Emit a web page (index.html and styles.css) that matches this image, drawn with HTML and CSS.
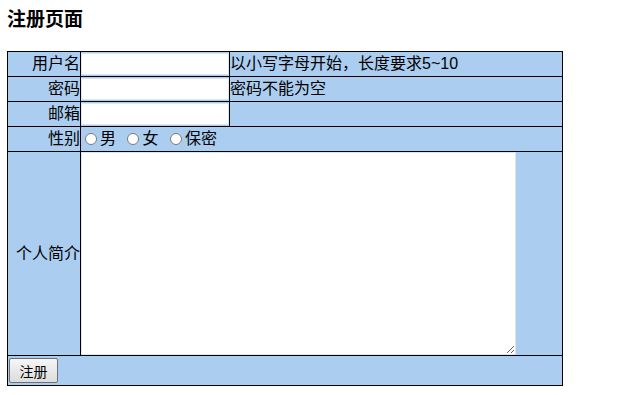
FILE: index.html
```html
<!DOCTYPE html>
<html>
<head>
<meta charset="utf-8">
<link rel="stylesheet" href="styles.css">
</head>
<body>
<div class="title">注册页面</div>
<form>
<table class="reg">
<tr>
<td class="label">用户名</td>
<td class="field"><input type="text" class="txt"></td>
<td class="hint">以小写字母开始，长度要求5~10</td>
</tr>
<tr>
<td class="label">密码</td>
<td class="field"><input type="password" class="txt"></td>
<td class="hint">密码不能为空</td>
</tr>
<tr>
<td class="label">邮箱</td>
<td class="field"><input type="text" class="txt"></td>
<td class="hint"></td>
</tr>
<tr>
<td class="label">性别</td>
<td class="field" colspan="2">
<label class="opt"><input type="radio" name="sex">男</label>
<label class="opt"><input type="radio" name="sex">女</label>
<label class="opt"><input type="radio" name="sex">保密</label>
</td>
</tr>
<tr>
<td class="label">个人简介</td>
<td class="field" colspan="2"><textarea class="intro"></textarea></td>
</tr>
<tr>
<td colspan="3" class="btnrow"><button type="button" class="btn">注册</button></td>
</tr>
</table>
</form>
</body>
</html>
```

FILE: styles.css
```css
body {
margin: 8px 7px;
font-family: "Liberation Sans", "Noto Sans CJK SC", sans-serif;
font-size: 16px;
color: #000;
}
.title {
font-size: 19px;
font-weight: bold;
line-height: 24px;
margin-bottom: 19px;
}
.reg {
width: 556px;
border-collapse: collapse;
border: 1px solid #444;
background: #abcdef;
}
.reg td {
border: 1px solid #000;
padding: 0;
height: 24px;
line-height: 22px;
}
.label {
width: 72px;
text-align: right;
white-space: nowrap;
}
.field {
width: 148px;
}
.txt {
display: block;
box-sizing: border-box;
width: 148px;
height: 22px;
margin: 0;
border: 1px solid #dde6f0;
background: #fff;
font-size: 14px;
}
.hint {
white-space: nowrap;
}
.opt {
margin-right: 3px;
}
.opt input {
width: 12px;
height: 12px;
margin: 0 3px 0 4px;
vertical-align: -1px;
}
.intro {
display: block;
box-sizing: border-box;
width: 435px;
height: 203px;
margin: 0;
border: 1px solid #dde6f0;
background: #fff;
resize: both;
}
.btnrow {
padding: 2px 1px !important;
}
.btn {
height: 25px;
width: 49px;
padding: 0;
font-size: 14px;
font-family: "Noto Sans CJK SC", sans-serif;
border: 1px solid #707070;
border-radius: 2px;
background: linear-gradient(#f6f6f6, #dcdcdc);
}
```
